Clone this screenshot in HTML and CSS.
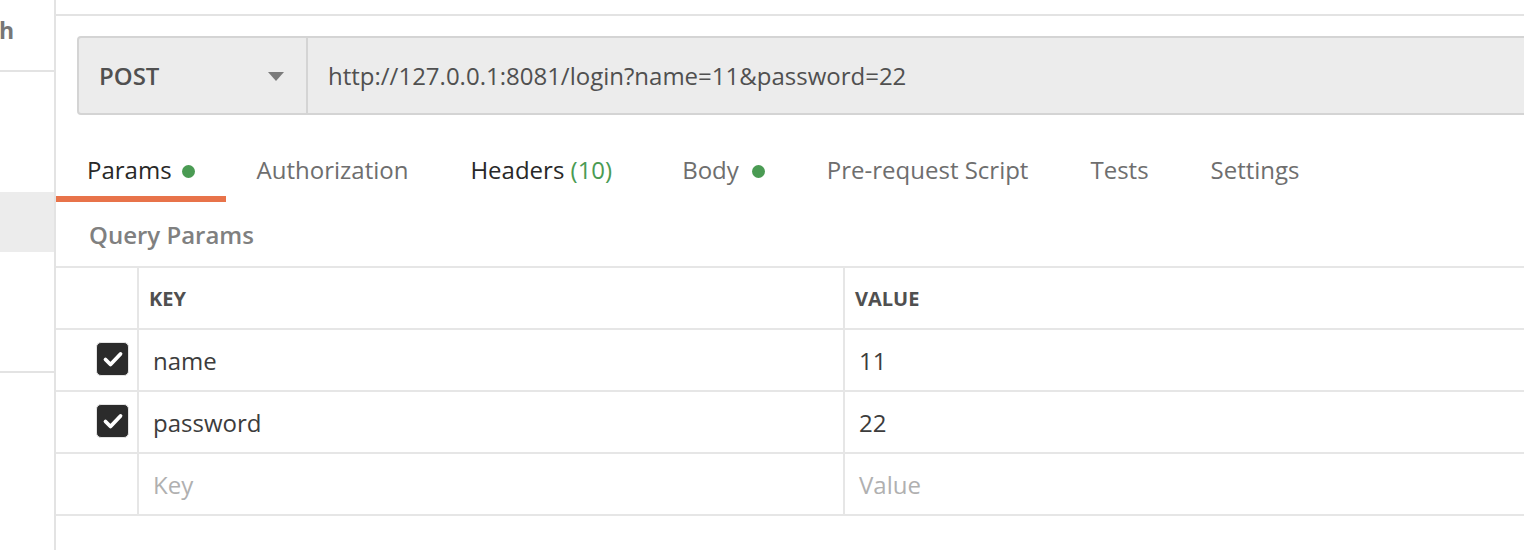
FILE: index.html
```html
<!DOCTYPE html>
<html>
<head>
<meta charset="utf-8">
<link rel="stylesheet" href="styles.css">
</head>
<body>
<div class="app">
  <aside class="sidebar">
    <div class="side-head"><span class="side-title">h</span></div>
    <div class="side-gap"></div>
    <div class="side-item"></div>
    <div class="side-rest"></div>
  </aside>
  <main class="main">
    <div class="topline"></div>
    <div class="urlbar">
      <div class="method">
        <span class="method-name">POST</span>
        <svg class="caret" width="16" height="9" viewBox="0 0 16 9"><path d="M0 0H16L8 9Z" fill="#7b7b7b"/></svg>
      </div>
      <div class="url">http://127.0.0.1:8081/login?name=11&amp;password=22</div>
    </div>
    <nav class="tabs">
      <div class="tab active">Params<span class="dot"></span></div>
      <div class="tab">Authorization</div>
      <div class="tab dark wide">Headers <span class="count">(10)</span></div>
      <div class="tab">Body<span class="dot wide-dot"></span></div>
      <div class="tab">Pre-request Script</div>
      <div class="tab">Tests</div>
      <div class="tab">Settings</div>
    </nav>
    <div class="section-title">Query Params</div>
    <div class="params">
      <div class="cell chk"></div>
      <div class="cell head">KEY</div>
      <div class="cell head last">VALUE</div>

      <div class="cell chk"><span class="box"><svg width="22" height="18" viewBox="0 0 22 18"><path d="M3.5 9.5L8.5 14.5L18.5 4" fill="none" stroke="#fff" stroke-width="3.8" stroke-linecap="round" stroke-linejoin="round"/></svg></span></div>
      <div class="cell val">name</div>
      <div class="cell val last">11</div>

      <div class="cell chk"><span class="box"><svg width="22" height="18" viewBox="0 0 22 18"><path d="M3.5 9.5L8.5 14.5L18.5 4" fill="none" stroke="#fff" stroke-width="3.8" stroke-linecap="round" stroke-linejoin="round"/></svg></span></div>
      <div class="cell val">password</div>
      <div class="cell val last">22</div>

      <div class="cell chk"></div>
      <div class="cell val ph">Key</div>
      <div class="cell val ph last">Value</div>
    </div>
  </main>
</div>
</body>
</html>
```

FILE: styles.css
```css
html, body {
  margin: 0;
  padding: 0;
  background: #fff;
}
body {
  width: 1524px;
  height: 550px;
  overflow: hidden;
  font-family: "Open Sans", "Liberation Sans", sans-serif;
  color: #505050;
}
.app {
  display: flex;
  height: 550px;
}
.sidebar {
  width: 54px;
  flex: none;
  border-right: 2px solid #e3e3e3;
  display: flex;
  flex-direction: column;
  overflow: hidden;
}
.side-head {
  height: 70px;
  border-bottom: 2px solid #e3e3e3;
  display: flex;
  align-items: flex-start;
}
.side-title {
  font-size: 23px;
  font-weight: 700;
  color: #777;
  line-height: 30px;
  margin-top: 15px;
  margin-left: -1px;
}
.side-gap {
  height: 120px;
}
.side-item {
  height: 60px;
  background: #ececec;
}
.side-rest {
  height: 119px;
  border-bottom: 2px solid #e3e3e3;
}
.main {
  flex: 1;
  min-width: 0;
  display: flex;
  flex-direction: column;
}
.topline {
  height: 14px;
  border-bottom: 2px solid #e3e3e3;
}
.urlbar {
  margin: 20px -20px 0 21px;
  height: 75px;
  display: flex;
  background: #ececec;
  border: 2px solid #d4d4d4;
  border-radius: 4px;
}
.method {
  width: 229px;
  flex: none;
  border-right: 2px solid #d4d4d4;
  display: flex;
  align-items: center;
  padding-left: 20px;
  box-sizing: border-box;
}
.method-name {
  font-size: 24px;
  font-weight: 600;
  color: #505050;
  flex: 1;
}
.caret {
  margin-right: 22px;
  margin-top: 2px;
}
.url {
  display: flex;
  align-items: center;
  padding-left: 20px;
  font-size: 24px;
  color: #505050;
}
.tabs {
  display: flex;
  margin-top: 40px;
}
.tab {
  padding: 0 31px 11px;
  line-height: 30px;
  font-size: 24px;
  color: #6e6e6e;
  border-bottom: 6px solid transparent;
  display: flex;
  align-items: center;
  white-space: pre;
}
.tab.active {
  color: #282828;
  border-bottom-color: #e8734a;
}
.tab.dark {
  color: #282828;
}
.tab.wide {
  margin-right: 8px;
}
.dot {
  display: inline-block;
  width: 13px;
  height: 13px;
  border-radius: 50%;
  background: #4a9b53;
  margin-left: 10px;
  margin-top: 2px;
}
.dot.wide-dot {
  margin-left: 13px;
}
.count {
  color: #4a9b53;
}
.section-title {
  margin: 19px 0 0 33px;
  font-size: 24px;
  line-height: 28px;
  font-weight: 600;
  color: #808080;
}
.params {
  margin-top: 17px;
  display: grid;
  grid-template-columns: 83px 706px 1fr;
  border-top: 2px solid #e6e6e6;
}
.cell {
  height: 60px;
  border-bottom: 2px solid #e6e6e6;
  border-right: 2px solid #e6e6e6;
  display: flex;
  align-items: center;
}
.cell.last {
  border-right: none;
}
.chk {
  justify-content: flex-end;
}
.head {
  padding-left: 10px;
  font-size: 20px;
  font-weight: 700;
  color: #505050;
}
.val {
  padding-left: 14px;
  font-size: 24px;
  color: #3c3c3c;
}
.val.ph {
  color: #b0b0b0;
}
.box {
  width: 31px;
  height: 32px;
  margin-right: 8px;
  margin-top: -2px;
  background: #2b2b2b;
  border: 1.5px solid #e4e4e4;
  border-radius: 5px;
  display: flex;
  align-items: center;
  justify-content: center;
}
```
